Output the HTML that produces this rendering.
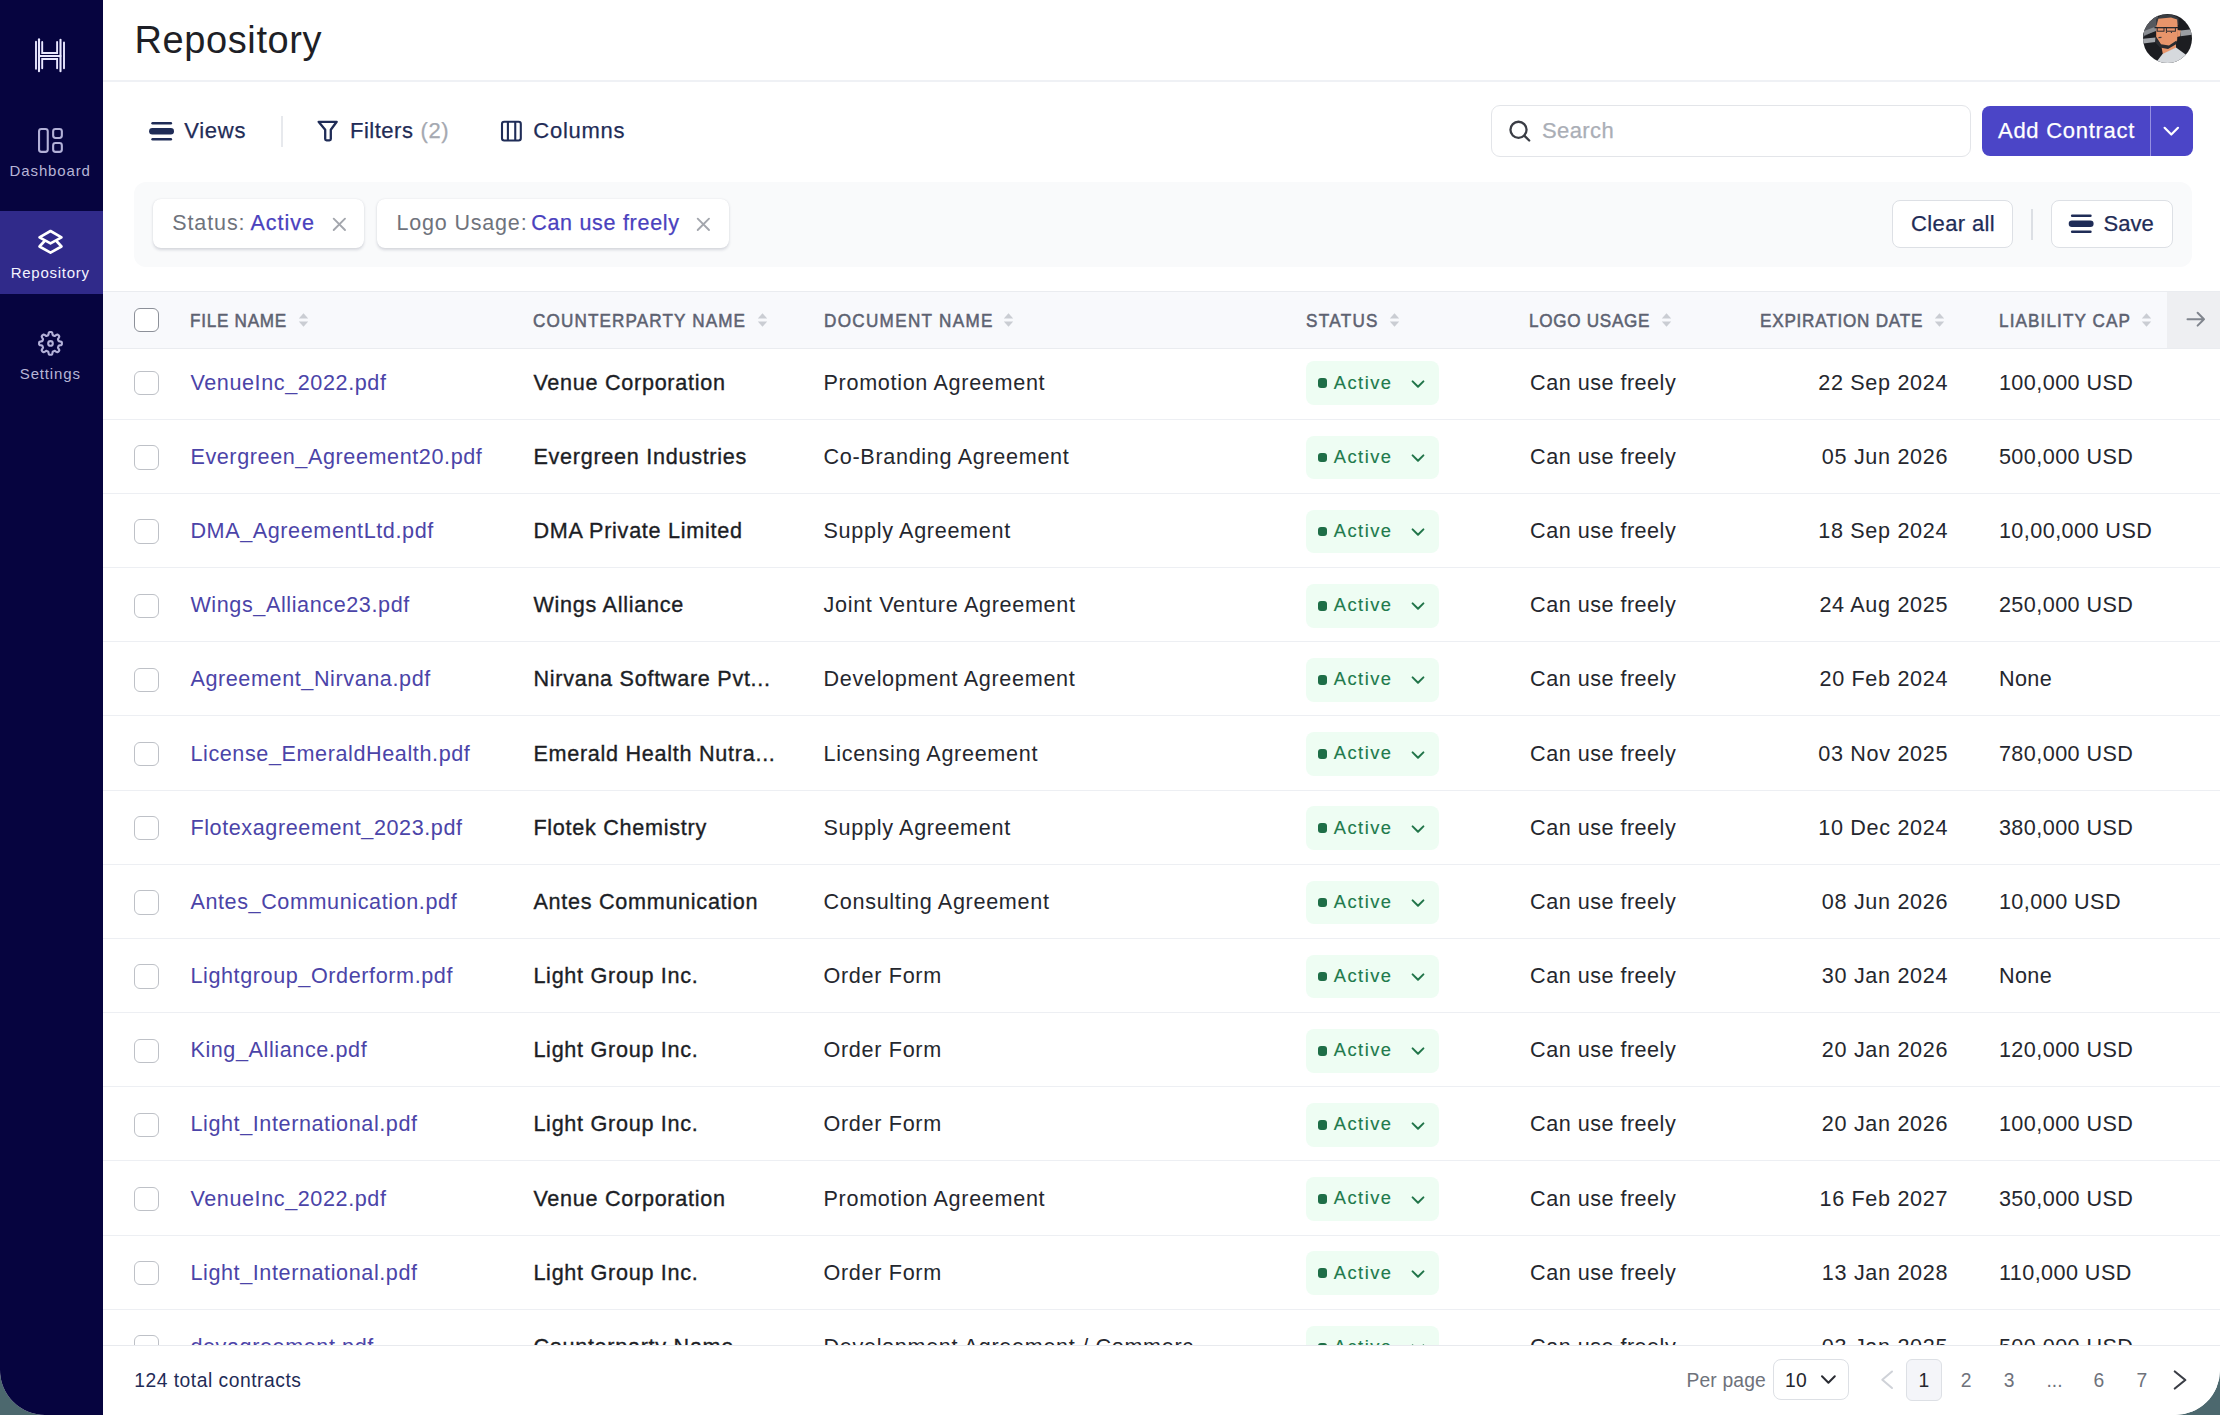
<!DOCTYPE html>
<html><head><meta charset="utf-8">
<style>
*{box-sizing:border-box;margin:0;padding:0}
html,body{width:2220px;height:1415px;overflow:hidden;background:#4C686E;font-family:"Liberation Sans",sans-serif}
.app{position:absolute;left:0;top:0;width:2220px;height:1415px;background:#fff;border-radius:0 0 45px 45px;overflow:hidden}
.ab{position:absolute}
.t{position:absolute;white-space:nowrap;color:#2A2C33}
.nav{color:#B7B5D6}
.tb{color:#1F2C57;-webkit-text-stroke:0.25px currentColor}
.chip{background:#fff;border-radius:8px;box-shadow:0 1.5px 3px rgba(30,40,70,0.16),0 0 1px rgba(30,40,70,0.08)}
.chipg{color:#6F737C}
.chipv{color:#4A41BE;-webkit-text-stroke:0.25px #4A41BE}
.link{color:#4B44A8}
.cp{color:#1C1E25;-webkit-text-stroke:0.35px #1C1E25}
.dn{color:#25272E}
.badge{color:#217A4C;-webkit-text-stroke:0.15px #217A4C}
.hd{color:#5D6271;-webkit-text-stroke:0.55px #5D6271}
.foot{color:#1F2C57}
.pg{color:#6E727B}
.pgd{color:#25272E}
</style></head><body>
<div class="app">
<div class="ab" style="left:0;top:0;width:103px;height:1415px;background:#06043F"></div>
<div class="ab" style="left:0;top:211px;width:103px;height:83px;background:#302A8A"></div>
<svg class="ab" style="left:0;top:0" width="103" height="100" viewBox="0 0 103 100">
<g stroke="#E9E7FF" fill="none" stroke-linecap="round" stroke-linejoin="miter">
<path d="M36 41.8 V68.8" stroke-width="1.9"/>
<path d="M39 39.3 V71.2" stroke-width="2.1"/>
<path d="M42.2 42 V53 H57.1 V42" stroke-width="1.9"/>
<path d="M42.2 68.2 V59 H57.1 V68.2" stroke-width="1.9"/>
<path d="M39 55.9 H60.5" stroke-width="2"/>
<path d="M60.5 39.8 V71.2" stroke-width="2.1"/>
<path d="M64 42.5 V68.2" stroke-width="1.9"/>
</g></svg>
<svg class="ab" style="left:0;top:100px" width="103" height="100" viewBox="0 100 103 100">
<g fill="none" stroke="#B3B1D8" stroke-width="2.1">
<rect x="39.05" y="128.95" width="8.7" height="22.9" rx="2.4"/>
<rect x="53.15" y="128.95" width="8.7" height="9" rx="2.4"/>
<rect x="53.15" y="143.05" width="8.7" height="8.8" rx="2.4"/>
</g></svg>
<svg class="ab" style="left:0;top:200px" width="103" height="100" viewBox="0 200 103 100">
<g fill="none" stroke="#fff" stroke-width="2.6" stroke-linejoin="round" stroke-linecap="round">
<path d="M50.5 231 L61.5 237.3 L50.5 243.4 L39.5 237.3 Z"/>
<path d="M44.6 241 L39.5 246.5 L50.5 252.6 L61.5 246.5 L56.4 241"/>
</g></svg>
<svg class="ab" style="left:0;top:300px" width="103" height="100" viewBox="0 300 103 100">
<g fill="none" stroke="#B3B1D8" stroke-width="2.1" stroke-linejoin="round">
<path d="M61.9 343.4 L61.9 343.6 L61.9 343.8 L61.9 344.1 L61.8 344.3 L61.8 344.5 L61.6 344.7 L61.5 344.9 L61.2 345.1 L60.7 345.2 L60.2 345.3 L59.7 345.4 L59.2 345.5 L58.9 345.6 L58.8 345.7 L58.6 345.9 L58.5 346.0 L58.5 346.2 L58.4 346.3 L58.3 346.5 L58.3 346.6 L58.2 346.8 L58.1 346.9 L58.1 347.1 L58.0 347.2 L58.0 347.4 L58.0 347.6 L58.0 347.8 L58.2 348.1 L58.4 348.5 L58.7 348.9 L59.0 349.4 L59.2 349.8 L59.3 350.1 L59.3 350.3 L59.2 350.6 L59.1 350.8 L59.0 351.0 L58.9 351.1 L58.7 351.3 L58.6 351.5 L58.4 351.6 L58.2 351.8 L58.1 351.9 L57.9 352.0 L57.7 352.1 L57.4 352.2 L57.2 352.2 L56.9 352.1 L56.5 351.9 L56.0 351.6 L55.6 351.3 L55.2 351.1 L54.9 350.9 L54.7 350.9 L54.5 350.9 L54.3 350.9 L54.2 351.0 L54.0 351.0 L53.9 351.1 L53.7 351.2 L53.6 351.2 L53.4 351.3 L53.3 351.4 L53.1 351.4 L53.0 351.5 L52.8 351.7 L52.7 351.8 L52.6 352.1 L52.5 352.6 L52.4 353.1 L52.3 353.6 L52.2 354.1 L52.0 354.4 L51.8 354.5 L51.6 354.7 L51.4 354.7 L51.2 354.8 L50.9 354.8 L50.7 354.8 L50.5 354.8 L50.3 354.8 L50.1 354.8 L49.8 354.8 L49.6 354.7 L49.4 354.7 L49.2 354.5 L49.0 354.4 L48.8 354.1 L48.7 353.6 L48.6 353.1 L48.5 352.6 L48.4 352.1 L48.3 351.8 L48.2 351.7 L48.0 351.5 L47.9 351.4 L47.7 351.4 L47.6 351.3 L47.4 351.2 L47.3 351.2 L47.1 351.1 L47.0 351.0 L46.8 351.0 L46.7 350.9 L46.5 350.9 L46.3 350.9 L46.1 350.9 L45.8 351.1 L45.4 351.3 L45.0 351.6 L44.5 351.9 L44.1 352.1 L43.8 352.2 L43.6 352.2 L43.3 352.1 L43.1 352.0 L42.9 351.9 L42.8 351.8 L42.6 351.6 L42.4 351.5 L42.3 351.3 L42.1 351.1 L42.0 351.0 L41.9 350.8 L41.8 350.6 L41.7 350.3 L41.7 350.1 L41.8 349.8 L42.0 349.4 L42.3 348.9 L42.6 348.5 L42.8 348.1 L43.0 347.8 L43.0 347.6 L43.0 347.4 L43.0 347.2 L42.9 347.1 L42.9 346.9 L42.8 346.8 L42.7 346.6 L42.7 346.5 L42.6 346.3 L42.5 346.2 L42.5 346.0 L42.4 345.9 L42.2 345.7 L42.1 345.6 L41.8 345.5 L41.3 345.4 L40.8 345.3 L40.3 345.2 L39.8 345.1 L39.5 344.9 L39.4 344.7 L39.2 344.5 L39.2 344.3 L39.1 344.1 L39.1 343.8 L39.1 343.6 L39.1 343.4 L39.1 343.2 L39.1 343.0 L39.1 342.7 L39.2 342.5 L39.2 342.3 L39.4 342.1 L39.5 341.9 L39.8 341.7 L40.3 341.6 L40.8 341.5 L41.3 341.4 L41.8 341.3 L42.1 341.2 L42.2 341.1 L42.4 340.9 L42.5 340.8 L42.5 340.6 L42.6 340.5 L42.7 340.3 L42.7 340.2 L42.8 340.0 L42.9 339.9 L42.9 339.7 L43.0 339.6 L43.0 339.4 L43.0 339.2 L43.0 339.0 L42.8 338.7 L42.6 338.3 L42.3 337.9 L42.0 337.4 L41.8 337.0 L41.7 336.7 L41.7 336.5 L41.8 336.2 L41.9 336.0 L42.0 335.8 L42.1 335.7 L42.3 335.5 L42.4 335.3 L42.6 335.2 L42.8 335.0 L42.9 334.9 L43.1 334.8 L43.3 334.7 L43.6 334.6 L43.8 334.6 L44.1 334.7 L44.5 334.9 L45.0 335.2 L45.4 335.5 L45.8 335.7 L46.1 335.9 L46.3 335.9 L46.5 335.9 L46.7 335.9 L46.8 335.8 L47.0 335.8 L47.1 335.7 L47.3 335.6 L47.4 335.6 L47.6 335.5 L47.7 335.4 L47.9 335.4 L48.0 335.3 L48.2 335.1 L48.3 335.0 L48.4 334.7 L48.5 334.2 L48.6 333.7 L48.7 333.2 L48.8 332.7 L49.0 332.4 L49.2 332.3 L49.4 332.1 L49.6 332.1 L49.8 332.0 L50.1 332.0 L50.3 332.0 L50.5 332.0 L50.7 332.0 L50.9 332.0 L51.2 332.0 L51.4 332.1 L51.6 332.1 L51.8 332.3 L52.0 332.4 L52.2 332.7 L52.3 333.2 L52.4 333.7 L52.5 334.2 L52.6 334.7 L52.7 335.0 L52.8 335.1 L53.0 335.3 L53.1 335.4 L53.3 335.4 L53.4 335.5 L53.6 335.6 L53.7 335.6 L53.9 335.7 L54.0 335.8 L54.2 335.8 L54.3 335.9 L54.5 335.9 L54.7 335.9 L54.9 335.9 L55.2 335.7 L55.6 335.5 L56.0 335.2 L56.5 334.9 L56.9 334.7 L57.2 334.6 L57.4 334.6 L57.7 334.7 L57.9 334.8 L58.1 334.9 L58.2 335.0 L58.4 335.2 L58.6 335.3 L58.7 335.5 L58.9 335.7 L59.0 335.8 L59.1 336.0 L59.2 336.2 L59.3 336.5 L59.3 336.7 L59.2 337.0 L59.0 337.4 L58.7 337.9 L58.4 338.3 L58.2 338.7 L58.0 339.0 L58.0 339.2 L58.0 339.4 L58.0 339.6 L58.1 339.7 L58.1 339.9 L58.2 340.0 L58.3 340.2 L58.3 340.3 L58.4 340.5 L58.5 340.6 L58.5 340.8 L58.6 340.9 L58.8 341.1 L58.9 341.2 L59.2 341.3 L59.7 341.4 L60.2 341.5 L60.7 341.6 L61.2 341.7 L61.5 341.9 L61.6 342.1 L61.8 342.3 L61.8 342.5 L61.9 342.7 L61.9 343.0 L61.9 343.2Z"/>
<circle cx="50.5" cy="343.4" r="2.3"/>
</g></svg>
<span class="t nav" style="left:9.60px;top:163.30px;font-size:15px;line-height:15px;letter-spacing:0.87px">Dashboard</span>
<span class="t nav" style="left:10.70px;top:265.30px;font-size:15px;line-height:15px;color:#F4F3FF;letter-spacing:0.73px">Repository</span>
<span class="t nav" style="left:19.80px;top:365.70px;font-size:15px;line-height:15px;letter-spacing:0.84px">Settings</span>
<span class="t " style="left:134.50px;top:20.93px;font-size:38px;line-height:38px;color:#1E1F26;letter-spacing:0.6px">Repository</span>
<div class="ab" style="left:103px;top:80px;width:2117px;height:2px;background:#EFF1F5"></div>
<div class="ab" style="left:2143.2px;top:13.8px;width:49.2px;height:49.2px;border-radius:50%;overflow:hidden"><svg style="position:absolute;left:-0.2px;top:0.2px" width="50" height="50" viewBox="2143 14 50 50">
<g>
<rect x="2140" y="10" width="60" height="60" fill="#1C1D21"/>
<path d="M2143 24 L2150 16 L2158 14 L2158 29 L2143 37 Z" fill="#55585E"/>
<path d="M2144 31 L2156 26.5 L2156 31 L2144 35.5 Z" fill="#8A8D92"/>
<path d="M2143 38.8 L2155.5 37.6 L2155.5 42 L2143 43.6 Z" fill="#A3A6AB"/>
<path d="M2156 19 L2162 14.6 L2172 14.4 L2178.5 18 L2178.5 25 L2156 25 Z" fill="#3A3C41"/>
<path d="M2158.4 18.7 L2171 17.5 L2177.1 19.5 L2177.7 27 L2177.1 41 L2172 44.7 L2161 44.7 L2156.2 38 L2156.2 27 Z" fill="#E8956B"/>
<path d="M2177.1 30 L2181 30.5 L2180 36.2 L2177.1 37 Z" fill="#E8956B"/>
<path d="M2160.7 43 L2176 41.8 L2176 48 L2163 54.8 Z" fill="#E8956B"/>
<path d="M2180.5 30.6 L2193 29.2 L2193 34.5 L2180.5 36.2 Z" fill="#9A9DA2"/>
<path d="M2156.2 36.7 L2161 44.2 L2169 45.6 L2176.5 40.5 L2176.5 44 L2168 49 L2160 47.5 L2155 42 Z" fill="#2B2C31"/>
<path d="M2154.5 27.6 H2178.2" stroke="#1E1F24" stroke-width="1.4"/>
<rect x="2157.2" y="27.6" width="6.8" height="3.6" fill="none" stroke="#2A2B30" stroke-width="1"/>
<rect x="2166.4" y="27.6" width="9" height="3.6" fill="none" stroke="#2A2B30" stroke-width="1"/>
<circle cx="2166.4" cy="32.4" r="0.6" fill="#2A2B30"/><circle cx="2171.4" cy="32.4" r="0.6" fill="#2A2B30"/>
<path d="M2158.5 37.6 L2161.5 37.3" stroke="#3A3B40" stroke-width="1.2"/>
<path d="M2155.6 63 L2162.5 54 L2176 47.5 L2186 54.8 L2186 64 Z" fill="#D6D9DD"/>
</g></svg></div>
<svg class="ab" style="left:140px;top:110px" width="40" height="40" viewBox="140 110 40 40"><g fill="#1F2C57">
<rect x="151.3" y="122" width="20.8" height="2.5" rx="1.25"/>
<rect x="149.1" y="128" width="24.9" height="6.4" rx="3.2"/>
<rect x="151.3" y="138.1" width="20.8" height="2.5" rx="1.25"/>
</g></svg>
<span class="t tb" style="left:184.30px;top:120.28px;font-size:22px;line-height:22px;letter-spacing:0.7px">Views</span>
<div class="ab" style="left:280.5px;top:116px;width:2px;height:31px;background:#E7E9ED"></div>
<svg class="ab" style="left:310px;top:112px" width="36" height="36" viewBox="310 112 36 36"><path d="M318.6 121.8 H336.7 L330.8 129.8 V139 Q330.8 140.3 329.5 140.3 H326.5 Q325.2 140.3 325.2 139 V129.8 Z" fill="none" stroke="#1F2C57" stroke-width="2.3" stroke-linejoin="round"/></svg>
<span class="t tb" style="left:350.00px;top:120.28px;font-size:22px;line-height:22px;letter-spacing:0.5px">Filters</span>
<span class="t tb" style="left:420.40px;top:120.28px;font-size:22px;line-height:22px;color:#A5A9B1;letter-spacing:0.7px">(2)</span>
<svg class="ab" style="left:494px;top:112px" width="36" height="36" viewBox="494 112 36 36"><g fill="none" stroke="#1F2C57" stroke-width="2.1"><rect x="502" y="121.8" width="18.8" height="18.7" rx="2.2"/><path d="M507.9 121.8 V140.5 M515.25 121.8 V140.5"/></g></svg>
<span class="t tb" style="left:533.30px;top:120.28px;font-size:22px;line-height:22px;letter-spacing:0.73px">Columns</span>
<div class="ab" style="left:1490.5px;top:105px;width:480px;height:52px;border:1.5px solid #E3E5E9;border-radius:9px;background:#fff"></div>
<svg class="ab" style="left:1500px;top:112px" width="40" height="40" viewBox="1500 112 40 40"><g fill="none" stroke="#3A3D45" stroke-width="2.3" stroke-linecap="round"><circle cx="1518.5" cy="129.8" r="8.05"/><path d="M1524.3 135.6 L1529.2 140.5"/></g></svg>
<span class="t tb" style="left:1542.00px;top:120.28px;font-size:22px;line-height:22px;color:#AAAEB6;letter-spacing:0.4px">Search</span>
<div class="ab" style="left:1982px;top:106.4px;width:211px;height:49.6px;background:#4B45C7;border-radius:8px"></div>
<div class="ab" style="left:2150px;top:106.4px;width:1.2px;height:49.6px;background:#958FE2"></div>
<svg class="ab" style="left:2158px;top:120px" width="28" height="22" viewBox="2158 120 28 22"><path d="M2164.6 127.8 L2171.3 134.5 L2178 127.8" fill="none" stroke="#fff" stroke-width="2.2" stroke-linecap="round" stroke-linejoin="round"/></svg>
<span class="t tb" style="left:1998.00px;top:120.28px;font-size:22px;line-height:22px;color:#fff;letter-spacing:0.73px">Add Contract</span>
<div class="ab" style="left:134px;top:182px;width:2058px;height:85px;background:#F9FAFB;border-radius:12px"></div>
<div class="ab chip" style="left:152.5px;top:199px;width:211.5px;height:49px"></div>
<div class="ab chip" style="left:376.5px;top:199px;width:352px;height:49px"></div>
<span class="t chipg" style="left:172.20px;top:212.50px;font-size:21.5px;line-height:21.5px;letter-spacing:0.9px">Status:</span>
<span class="t chipv" style="left:250.50px;top:212.50px;font-size:21.5px;line-height:21.5px;letter-spacing:1.0px">Active</span>
<span class="t chipg" style="left:396.50px;top:212.50px;font-size:21.5px;line-height:21.5px;letter-spacing:0.82px">Logo Usage:</span>
<span class="t chipv" style="left:531.20px;top:212.50px;font-size:21.5px;line-height:21.5px;letter-spacing:0.71px">Can use freely</span>
<svg class="ab" style="left:331.4px;top:215.6px" width="17" height="17" viewBox="0 0 17 17"><path d="M2.7 2.7 L14 14 M14 2.7 L2.7 14" stroke="#A3A6AD" stroke-width="1.9" stroke-linecap="round"/></svg>
<svg class="ab" style="left:695.4px;top:215.6px" width="17" height="17" viewBox="0 0 17 17"><path d="M2.7 2.7 L14 14 M14 2.7 L2.7 14" stroke="#A3A6AD" stroke-width="1.9" stroke-linecap="round"/></svg>
<div class="ab" style="left:1892px;top:199.6px;width:120.5px;height:48.3px;border:1.5px solid #DDE0E5;border-radius:8px;background:#fff"></div>
<span class="t tb" style="left:1911.00px;top:213.28px;font-size:22px;line-height:22px;letter-spacing:0.38px">Clear all</span>
<div class="ab" style="left:2031px;top:209px;width:2px;height:31px;background:#DCDFE4"></div>
<div class="ab" style="left:2050.5px;top:199.6px;width:122.5px;height:48.3px;border:1.5px solid #DDE0E5;border-radius:8px;background:#fff"></div>
<svg class="ab" style="left:2060px;top:205px" width="40" height="40" viewBox="2060 205 40 40"><g fill="#1F2C57">
<rect x="2070.9" y="214.5" width="20.8" height="2.5" rx="1.25"/>
<rect x="2068.7" y="220.5" width="24.9" height="6.4" rx="3.2"/>
<rect x="2070.9" y="230.6" width="20.8" height="2.5" rx="1.25"/>
</g></svg>
<span class="t tb" style="left:2103.60px;top:213.28px;font-size:22px;line-height:22px;letter-spacing:0.0px">Save</span>
<div class="ab" style="left:103px;top:418.70px;width:2117px;height:1px;background:#EDEFF3"></div>
<div style="position:absolute;width:24.4px;height:24.4px;border:1.8px solid #BEC1C7;border-radius:6px;background:#fff;left:134.2px;top:371.00px"></div>
<span class="t link" style="left:190.40px;top:371.72px;font-size:21.6px;line-height:21.6px;letter-spacing:0.59px">VenueInc_2022.pdf</span>
<span class="t cp" style="left:533.40px;top:371.72px;font-size:21.6px;line-height:21.6px;letter-spacing:0.72px">Venue Corporation</span>
<span class="t dn" style="left:823.50px;top:371.72px;font-size:21.6px;line-height:21.6px;letter-spacing:0.68px">Promotion Agreement</span>
<div class="ab" style="left:1306.4px;top:361.40px;width:133px;height:43.6px;background:#EEFDF3;border-radius:8px"></div>
<div class="ab" style="left:1317.8px;top:378.40px;width:9.4px;height:9.6px;border-radius:3px;background:#1E6E47"></div>
<span class="t badge" style="left:1333.80px;top:373.51px;font-size:18.3px;line-height:18.3px;letter-spacing:1.48px">Active</span>
<svg class="ab" style="left:1409px;top:377.80px" width="18" height="14" viewBox="0 0 18 14"><path d="M3.6 3.4 L9 8.7 L14.4 3.4" fill="none" stroke="#217549" stroke-width="2.0" stroke-linecap="round" stroke-linejoin="round"/></svg>
<span class="t dn" style="left:1530.10px;top:371.72px;font-size:21.6px;line-height:21.6px;letter-spacing:0.49px">Can use freely</span>
<span class="t dn" style="right:271.82px;top:371.72px;font-size:21.6px;line-height:21.6px;letter-spacing:0.68px">22 Sep 2024</span>
<span class="t dn" style="left:1998.90px;top:371.72px;font-size:21.6px;line-height:21.6px;letter-spacing:0.44px">100,000 USD</span>
<div class="ab" style="left:103px;top:492.87px;width:2117px;height:1px;background:#EDEFF3"></div>
<div style="position:absolute;width:24.4px;height:24.4px;border:1.8px solid #BEC1C7;border-radius:6px;background:#fff;left:134.2px;top:445.17px"></div>
<span class="t link" style="left:190.40px;top:445.89px;font-size:21.6px;line-height:21.6px;letter-spacing:0.59px">Evergreen_Agreement20.pdf</span>
<span class="t cp" style="left:533.40px;top:445.89px;font-size:21.6px;line-height:21.6px;letter-spacing:0.72px">Evergreen Industries</span>
<span class="t dn" style="left:823.50px;top:445.89px;font-size:21.6px;line-height:21.6px;letter-spacing:0.68px">Co-Branding Agreement</span>
<div class="ab" style="left:1306.4px;top:435.57px;width:133px;height:43.6px;background:#EEFDF3;border-radius:8px"></div>
<div class="ab" style="left:1317.8px;top:452.57px;width:9.4px;height:9.6px;border-radius:3px;background:#1E6E47"></div>
<span class="t badge" style="left:1333.80px;top:447.68px;font-size:18.3px;line-height:18.3px;letter-spacing:1.48px">Active</span>
<svg class="ab" style="left:1409px;top:451.97px" width="18" height="14" viewBox="0 0 18 14"><path d="M3.6 3.4 L9 8.7 L14.4 3.4" fill="none" stroke="#217549" stroke-width="2.0" stroke-linecap="round" stroke-linejoin="round"/></svg>
<span class="t dn" style="left:1530.10px;top:445.89px;font-size:21.6px;line-height:21.6px;letter-spacing:0.49px">Can use freely</span>
<span class="t dn" style="right:271.82px;top:445.89px;font-size:21.6px;line-height:21.6px;letter-spacing:0.68px">05 Jun 2026</span>
<span class="t dn" style="left:1998.90px;top:445.89px;font-size:21.6px;line-height:21.6px;letter-spacing:0.44px">500,000 USD</span>
<div class="ab" style="left:103px;top:567.04px;width:2117px;height:1px;background:#EDEFF3"></div>
<div style="position:absolute;width:24.4px;height:24.4px;border:1.8px solid #BEC1C7;border-radius:6px;background:#fff;left:134.2px;top:519.34px"></div>
<span class="t link" style="left:190.40px;top:520.06px;font-size:21.6px;line-height:21.6px;letter-spacing:0.59px">DMA_AgreementLtd.pdf</span>
<span class="t cp" style="left:533.40px;top:520.06px;font-size:21.6px;line-height:21.6px;letter-spacing:0.72px">DMA Private Limited</span>
<span class="t dn" style="left:823.50px;top:520.06px;font-size:21.6px;line-height:21.6px;letter-spacing:0.68px">Supply Agreement</span>
<div class="ab" style="left:1306.4px;top:509.74px;width:133px;height:43.6px;background:#EEFDF3;border-radius:8px"></div>
<div class="ab" style="left:1317.8px;top:526.74px;width:9.4px;height:9.6px;border-radius:3px;background:#1E6E47"></div>
<span class="t badge" style="left:1333.80px;top:521.85px;font-size:18.3px;line-height:18.3px;letter-spacing:1.48px">Active</span>
<svg class="ab" style="left:1409px;top:526.14px" width="18" height="14" viewBox="0 0 18 14"><path d="M3.6 3.4 L9 8.7 L14.4 3.4" fill="none" stroke="#217549" stroke-width="2.0" stroke-linecap="round" stroke-linejoin="round"/></svg>
<span class="t dn" style="left:1530.10px;top:520.06px;font-size:21.6px;line-height:21.6px;letter-spacing:0.49px">Can use freely</span>
<span class="t dn" style="right:271.82px;top:520.06px;font-size:21.6px;line-height:21.6px;letter-spacing:0.68px">18 Sep 2024</span>
<span class="t dn" style="left:1998.90px;top:520.06px;font-size:21.6px;line-height:21.6px;letter-spacing:0.44px">10,00,000 USD</span>
<div class="ab" style="left:103px;top:641.21px;width:2117px;height:1px;background:#EDEFF3"></div>
<div style="position:absolute;width:24.4px;height:24.4px;border:1.8px solid #BEC1C7;border-radius:6px;background:#fff;left:134.2px;top:593.51px"></div>
<span class="t link" style="left:190.40px;top:594.23px;font-size:21.6px;line-height:21.6px;letter-spacing:0.59px">Wings_Alliance23.pdf</span>
<span class="t cp" style="left:533.40px;top:594.23px;font-size:21.6px;line-height:21.6px;letter-spacing:0.72px">Wings Alliance</span>
<span class="t dn" style="left:823.50px;top:594.23px;font-size:21.6px;line-height:21.6px;letter-spacing:0.68px">Joint Venture Agreement</span>
<div class="ab" style="left:1306.4px;top:583.91px;width:133px;height:43.6px;background:#EEFDF3;border-radius:8px"></div>
<div class="ab" style="left:1317.8px;top:600.91px;width:9.4px;height:9.6px;border-radius:3px;background:#1E6E47"></div>
<span class="t badge" style="left:1333.80px;top:596.02px;font-size:18.3px;line-height:18.3px;letter-spacing:1.48px">Active</span>
<svg class="ab" style="left:1409px;top:600.31px" width="18" height="14" viewBox="0 0 18 14"><path d="M3.6 3.4 L9 8.7 L14.4 3.4" fill="none" stroke="#217549" stroke-width="2.0" stroke-linecap="round" stroke-linejoin="round"/></svg>
<span class="t dn" style="left:1530.10px;top:594.23px;font-size:21.6px;line-height:21.6px;letter-spacing:0.49px">Can use freely</span>
<span class="t dn" style="right:271.82px;top:594.23px;font-size:21.6px;line-height:21.6px;letter-spacing:0.68px">24 Aug 2025</span>
<span class="t dn" style="left:1998.90px;top:594.23px;font-size:21.6px;line-height:21.6px;letter-spacing:0.44px">250,000 USD</span>
<div class="ab" style="left:103px;top:715.38px;width:2117px;height:1px;background:#EDEFF3"></div>
<div style="position:absolute;width:24.4px;height:24.4px;border:1.8px solid #BEC1C7;border-radius:6px;background:#fff;left:134.2px;top:667.68px"></div>
<span class="t link" style="left:190.40px;top:668.40px;font-size:21.6px;line-height:21.6px;letter-spacing:0.59px">Agreement_Nirvana.pdf</span>
<span class="t cp" style="left:533.40px;top:668.40px;font-size:21.6px;line-height:21.6px;letter-spacing:0.72px">Nirvana Software Pvt...</span>
<span class="t dn" style="left:823.50px;top:668.40px;font-size:21.6px;line-height:21.6px;letter-spacing:0.68px">Development Agreement</span>
<div class="ab" style="left:1306.4px;top:658.08px;width:133px;height:43.6px;background:#EEFDF3;border-radius:8px"></div>
<div class="ab" style="left:1317.8px;top:675.08px;width:9.4px;height:9.6px;border-radius:3px;background:#1E6E47"></div>
<span class="t badge" style="left:1333.80px;top:670.19px;font-size:18.3px;line-height:18.3px;letter-spacing:1.48px">Active</span>
<svg class="ab" style="left:1409px;top:674.48px" width="18" height="14" viewBox="0 0 18 14"><path d="M3.6 3.4 L9 8.7 L14.4 3.4" fill="none" stroke="#217549" stroke-width="2.0" stroke-linecap="round" stroke-linejoin="round"/></svg>
<span class="t dn" style="left:1530.10px;top:668.40px;font-size:21.6px;line-height:21.6px;letter-spacing:0.49px">Can use freely</span>
<span class="t dn" style="right:271.82px;top:668.40px;font-size:21.6px;line-height:21.6px;letter-spacing:0.68px">20 Feb 2024</span>
<span class="t dn" style="left:1998.90px;top:668.40px;font-size:21.6px;line-height:21.6px;letter-spacing:0.44px">None</span>
<div class="ab" style="left:103px;top:789.55px;width:2117px;height:1px;background:#EDEFF3"></div>
<div style="position:absolute;width:24.4px;height:24.4px;border:1.8px solid #BEC1C7;border-radius:6px;background:#fff;left:134.2px;top:741.85px"></div>
<span class="t link" style="left:190.40px;top:742.57px;font-size:21.6px;line-height:21.6px;letter-spacing:0.59px">License_EmeraldHealth.pdf</span>
<span class="t cp" style="left:533.40px;top:742.57px;font-size:21.6px;line-height:21.6px;letter-spacing:0.72px">Emerald Health Nutra...</span>
<span class="t dn" style="left:823.50px;top:742.57px;font-size:21.6px;line-height:21.6px;letter-spacing:0.68px">Licensing Agreement</span>
<div class="ab" style="left:1306.4px;top:732.25px;width:133px;height:43.6px;background:#EEFDF3;border-radius:8px"></div>
<div class="ab" style="left:1317.8px;top:749.25px;width:9.4px;height:9.6px;border-radius:3px;background:#1E6E47"></div>
<span class="t badge" style="left:1333.80px;top:744.36px;font-size:18.3px;line-height:18.3px;letter-spacing:1.48px">Active</span>
<svg class="ab" style="left:1409px;top:748.65px" width="18" height="14" viewBox="0 0 18 14"><path d="M3.6 3.4 L9 8.7 L14.4 3.4" fill="none" stroke="#217549" stroke-width="2.0" stroke-linecap="round" stroke-linejoin="round"/></svg>
<span class="t dn" style="left:1530.10px;top:742.57px;font-size:21.6px;line-height:21.6px;letter-spacing:0.49px">Can use freely</span>
<span class="t dn" style="right:271.82px;top:742.57px;font-size:21.6px;line-height:21.6px;letter-spacing:0.68px">03 Nov 2025</span>
<span class="t dn" style="left:1998.90px;top:742.57px;font-size:21.6px;line-height:21.6px;letter-spacing:0.44px">780,000 USD</span>
<div class="ab" style="left:103px;top:863.72px;width:2117px;height:1px;background:#EDEFF3"></div>
<div style="position:absolute;width:24.4px;height:24.4px;border:1.8px solid #BEC1C7;border-radius:6px;background:#fff;left:134.2px;top:816.02px"></div>
<span class="t link" style="left:190.40px;top:816.74px;font-size:21.6px;line-height:21.6px;letter-spacing:0.59px">Flotexagreement_2023.pdf</span>
<span class="t cp" style="left:533.40px;top:816.74px;font-size:21.6px;line-height:21.6px;letter-spacing:0.72px">Flotek Chemistry</span>
<span class="t dn" style="left:823.50px;top:816.74px;font-size:21.6px;line-height:21.6px;letter-spacing:0.68px">Supply Agreement</span>
<div class="ab" style="left:1306.4px;top:806.42px;width:133px;height:43.6px;background:#EEFDF3;border-radius:8px"></div>
<div class="ab" style="left:1317.8px;top:823.42px;width:9.4px;height:9.6px;border-radius:3px;background:#1E6E47"></div>
<span class="t badge" style="left:1333.80px;top:818.53px;font-size:18.3px;line-height:18.3px;letter-spacing:1.48px">Active</span>
<svg class="ab" style="left:1409px;top:822.82px" width="18" height="14" viewBox="0 0 18 14"><path d="M3.6 3.4 L9 8.7 L14.4 3.4" fill="none" stroke="#217549" stroke-width="2.0" stroke-linecap="round" stroke-linejoin="round"/></svg>
<span class="t dn" style="left:1530.10px;top:816.74px;font-size:21.6px;line-height:21.6px;letter-spacing:0.49px">Can use freely</span>
<span class="t dn" style="right:271.82px;top:816.74px;font-size:21.6px;line-height:21.6px;letter-spacing:0.68px">10 Dec 2024</span>
<span class="t dn" style="left:1998.90px;top:816.74px;font-size:21.6px;line-height:21.6px;letter-spacing:0.44px">380,000 USD</span>
<div class="ab" style="left:103px;top:937.89px;width:2117px;height:1px;background:#EDEFF3"></div>
<div style="position:absolute;width:24.4px;height:24.4px;border:1.8px solid #BEC1C7;border-radius:6px;background:#fff;left:134.2px;top:890.19px"></div>
<span class="t link" style="left:190.40px;top:890.91px;font-size:21.6px;line-height:21.6px;letter-spacing:0.59px">Antes_Communication.pdf</span>
<span class="t cp" style="left:533.40px;top:890.91px;font-size:21.6px;line-height:21.6px;letter-spacing:0.72px">Antes Communication</span>
<span class="t dn" style="left:823.50px;top:890.91px;font-size:21.6px;line-height:21.6px;letter-spacing:0.68px">Consulting Agreement</span>
<div class="ab" style="left:1306.4px;top:880.59px;width:133px;height:43.6px;background:#EEFDF3;border-radius:8px"></div>
<div class="ab" style="left:1317.8px;top:897.59px;width:9.4px;height:9.6px;border-radius:3px;background:#1E6E47"></div>
<span class="t badge" style="left:1333.80px;top:892.70px;font-size:18.3px;line-height:18.3px;letter-spacing:1.48px">Active</span>
<svg class="ab" style="left:1409px;top:896.99px" width="18" height="14" viewBox="0 0 18 14"><path d="M3.6 3.4 L9 8.7 L14.4 3.4" fill="none" stroke="#217549" stroke-width="2.0" stroke-linecap="round" stroke-linejoin="round"/></svg>
<span class="t dn" style="left:1530.10px;top:890.91px;font-size:21.6px;line-height:21.6px;letter-spacing:0.49px">Can use freely</span>
<span class="t dn" style="right:271.82px;top:890.91px;font-size:21.6px;line-height:21.6px;letter-spacing:0.68px">08 Jun 2026</span>
<span class="t dn" style="left:1998.90px;top:890.91px;font-size:21.6px;line-height:21.6px;letter-spacing:0.44px">10,000 USD</span>
<div class="ab" style="left:103px;top:1012.06px;width:2117px;height:1px;background:#EDEFF3"></div>
<div style="position:absolute;width:24.4px;height:24.4px;border:1.8px solid #BEC1C7;border-radius:6px;background:#fff;left:134.2px;top:964.36px"></div>
<span class="t link" style="left:190.40px;top:965.08px;font-size:21.6px;line-height:21.6px;letter-spacing:0.59px">Lightgroup_Orderform.pdf</span>
<span class="t cp" style="left:533.40px;top:965.08px;font-size:21.6px;line-height:21.6px;letter-spacing:0.72px">Light Group Inc.</span>
<span class="t dn" style="left:823.50px;top:965.08px;font-size:21.6px;line-height:21.6px;letter-spacing:0.68px">Order Form</span>
<div class="ab" style="left:1306.4px;top:954.76px;width:133px;height:43.6px;background:#EEFDF3;border-radius:8px"></div>
<div class="ab" style="left:1317.8px;top:971.76px;width:9.4px;height:9.6px;border-radius:3px;background:#1E6E47"></div>
<span class="t badge" style="left:1333.80px;top:966.87px;font-size:18.3px;line-height:18.3px;letter-spacing:1.48px">Active</span>
<svg class="ab" style="left:1409px;top:971.16px" width="18" height="14" viewBox="0 0 18 14"><path d="M3.6 3.4 L9 8.7 L14.4 3.4" fill="none" stroke="#217549" stroke-width="2.0" stroke-linecap="round" stroke-linejoin="round"/></svg>
<span class="t dn" style="left:1530.10px;top:965.08px;font-size:21.6px;line-height:21.6px;letter-spacing:0.49px">Can use freely</span>
<span class="t dn" style="right:271.82px;top:965.08px;font-size:21.6px;line-height:21.6px;letter-spacing:0.68px">30 Jan 2024</span>
<span class="t dn" style="left:1998.90px;top:965.08px;font-size:21.6px;line-height:21.6px;letter-spacing:0.44px">None</span>
<div class="ab" style="left:103px;top:1086.23px;width:2117px;height:1px;background:#EDEFF3"></div>
<div style="position:absolute;width:24.4px;height:24.4px;border:1.8px solid #BEC1C7;border-radius:6px;background:#fff;left:134.2px;top:1038.53px"></div>
<span class="t link" style="left:190.40px;top:1039.25px;font-size:21.6px;line-height:21.6px;letter-spacing:0.59px">King_Alliance.pdf</span>
<span class="t cp" style="left:533.40px;top:1039.25px;font-size:21.6px;line-height:21.6px;letter-spacing:0.72px">Light Group Inc.</span>
<span class="t dn" style="left:823.50px;top:1039.25px;font-size:21.6px;line-height:21.6px;letter-spacing:0.68px">Order Form</span>
<div class="ab" style="left:1306.4px;top:1028.93px;width:133px;height:43.6px;background:#EEFDF3;border-radius:8px"></div>
<div class="ab" style="left:1317.8px;top:1045.93px;width:9.4px;height:9.6px;border-radius:3px;background:#1E6E47"></div>
<span class="t badge" style="left:1333.80px;top:1041.04px;font-size:18.3px;line-height:18.3px;letter-spacing:1.48px">Active</span>
<svg class="ab" style="left:1409px;top:1045.33px" width="18" height="14" viewBox="0 0 18 14"><path d="M3.6 3.4 L9 8.7 L14.4 3.4" fill="none" stroke="#217549" stroke-width="2.0" stroke-linecap="round" stroke-linejoin="round"/></svg>
<span class="t dn" style="left:1530.10px;top:1039.25px;font-size:21.6px;line-height:21.6px;letter-spacing:0.49px">Can use freely</span>
<span class="t dn" style="right:271.82px;top:1039.25px;font-size:21.6px;line-height:21.6px;letter-spacing:0.68px">20 Jan 2026</span>
<span class="t dn" style="left:1998.90px;top:1039.25px;font-size:21.6px;line-height:21.6px;letter-spacing:0.44px">120,000 USD</span>
<div class="ab" style="left:103px;top:1160.40px;width:2117px;height:1px;background:#EDEFF3"></div>
<div style="position:absolute;width:24.4px;height:24.4px;border:1.8px solid #BEC1C7;border-radius:6px;background:#fff;left:134.2px;top:1112.70px"></div>
<span class="t link" style="left:190.40px;top:1113.42px;font-size:21.6px;line-height:21.6px;letter-spacing:0.59px">Light_International.pdf</span>
<span class="t cp" style="left:533.40px;top:1113.42px;font-size:21.6px;line-height:21.6px;letter-spacing:0.72px">Light Group Inc.</span>
<span class="t dn" style="left:823.50px;top:1113.42px;font-size:21.6px;line-height:21.6px;letter-spacing:0.68px">Order Form</span>
<div class="ab" style="left:1306.4px;top:1103.10px;width:133px;height:43.6px;background:#EEFDF3;border-radius:8px"></div>
<div class="ab" style="left:1317.8px;top:1120.10px;width:9.4px;height:9.6px;border-radius:3px;background:#1E6E47"></div>
<span class="t badge" style="left:1333.80px;top:1115.21px;font-size:18.3px;line-height:18.3px;letter-spacing:1.48px">Active</span>
<svg class="ab" style="left:1409px;top:1119.50px" width="18" height="14" viewBox="0 0 18 14"><path d="M3.6 3.4 L9 8.7 L14.4 3.4" fill="none" stroke="#217549" stroke-width="2.0" stroke-linecap="round" stroke-linejoin="round"/></svg>
<span class="t dn" style="left:1530.10px;top:1113.42px;font-size:21.6px;line-height:21.6px;letter-spacing:0.49px">Can use freely</span>
<span class="t dn" style="right:271.82px;top:1113.42px;font-size:21.6px;line-height:21.6px;letter-spacing:0.68px">20 Jan 2026</span>
<span class="t dn" style="left:1998.90px;top:1113.42px;font-size:21.6px;line-height:21.6px;letter-spacing:0.44px">100,000 USD</span>
<div class="ab" style="left:103px;top:1234.57px;width:2117px;height:1px;background:#EDEFF3"></div>
<div style="position:absolute;width:24.4px;height:24.4px;border:1.8px solid #BEC1C7;border-radius:6px;background:#fff;left:134.2px;top:1186.87px"></div>
<span class="t link" style="left:190.40px;top:1187.59px;font-size:21.6px;line-height:21.6px;letter-spacing:0.59px">VenueInc_2022.pdf</span>
<span class="t cp" style="left:533.40px;top:1187.59px;font-size:21.6px;line-height:21.6px;letter-spacing:0.72px">Venue Corporation</span>
<span class="t dn" style="left:823.50px;top:1187.59px;font-size:21.6px;line-height:21.6px;letter-spacing:0.68px">Promotion Agreement</span>
<div class="ab" style="left:1306.4px;top:1177.27px;width:133px;height:43.6px;background:#EEFDF3;border-radius:8px"></div>
<div class="ab" style="left:1317.8px;top:1194.27px;width:9.4px;height:9.6px;border-radius:3px;background:#1E6E47"></div>
<span class="t badge" style="left:1333.80px;top:1189.38px;font-size:18.3px;line-height:18.3px;letter-spacing:1.48px">Active</span>
<svg class="ab" style="left:1409px;top:1193.67px" width="18" height="14" viewBox="0 0 18 14"><path d="M3.6 3.4 L9 8.7 L14.4 3.4" fill="none" stroke="#217549" stroke-width="2.0" stroke-linecap="round" stroke-linejoin="round"/></svg>
<span class="t dn" style="left:1530.10px;top:1187.59px;font-size:21.6px;line-height:21.6px;letter-spacing:0.49px">Can use freely</span>
<span class="t dn" style="right:271.82px;top:1187.59px;font-size:21.6px;line-height:21.6px;letter-spacing:0.68px">16 Feb 2027</span>
<span class="t dn" style="left:1998.90px;top:1187.59px;font-size:21.6px;line-height:21.6px;letter-spacing:0.44px">350,000 USD</span>
<div class="ab" style="left:103px;top:1308.74px;width:2117px;height:1px;background:#EDEFF3"></div>
<div style="position:absolute;width:24.4px;height:24.4px;border:1.8px solid #BEC1C7;border-radius:6px;background:#fff;left:134.2px;top:1261.04px"></div>
<span class="t link" style="left:190.40px;top:1261.76px;font-size:21.6px;line-height:21.6px;letter-spacing:0.59px">Light_International.pdf</span>
<span class="t cp" style="left:533.40px;top:1261.76px;font-size:21.6px;line-height:21.6px;letter-spacing:0.72px">Light Group Inc.</span>
<span class="t dn" style="left:823.50px;top:1261.76px;font-size:21.6px;line-height:21.6px;letter-spacing:0.68px">Order Form</span>
<div class="ab" style="left:1306.4px;top:1251.44px;width:133px;height:43.6px;background:#EEFDF3;border-radius:8px"></div>
<div class="ab" style="left:1317.8px;top:1268.44px;width:9.4px;height:9.6px;border-radius:3px;background:#1E6E47"></div>
<span class="t badge" style="left:1333.80px;top:1263.55px;font-size:18.3px;line-height:18.3px;letter-spacing:1.48px">Active</span>
<svg class="ab" style="left:1409px;top:1267.84px" width="18" height="14" viewBox="0 0 18 14"><path d="M3.6 3.4 L9 8.7 L14.4 3.4" fill="none" stroke="#217549" stroke-width="2.0" stroke-linecap="round" stroke-linejoin="round"/></svg>
<span class="t dn" style="left:1530.10px;top:1261.76px;font-size:21.6px;line-height:21.6px;letter-spacing:0.49px">Can use freely</span>
<span class="t dn" style="right:271.82px;top:1261.76px;font-size:21.6px;line-height:21.6px;letter-spacing:0.68px">13 Jan 2028</span>
<span class="t dn" style="left:1998.90px;top:1261.76px;font-size:21.6px;line-height:21.6px;letter-spacing:0.44px">110,000 USD</span>
<div class="ab" style="left:103px;top:1382.91px;width:2117px;height:1px;background:#EDEFF3"></div>
<div style="position:absolute;width:24.4px;height:24.4px;border:1.8px solid #BEC1C7;border-radius:6px;background:#fff;left:134.2px;top:1335.21px"></div>
<span class="t link" style="left:190.40px;top:1335.93px;font-size:21.6px;line-height:21.6px;letter-spacing:0.59px">devagreement.pdf</span>
<span class="t cp" style="left:533.40px;top:1335.93px;font-size:21.6px;line-height:21.6px;letter-spacing:0.72px">Counterparty Name</span>
<span class="t dn" style="left:823.50px;top:1335.93px;font-size:21.6px;line-height:21.6px;letter-spacing:0.68px">Development Agreement / Commerc</span>
<div class="ab" style="left:1306.4px;top:1325.61px;width:133px;height:43.6px;background:#EEFDF3;border-radius:8px"></div>
<div class="ab" style="left:1317.8px;top:1342.61px;width:9.4px;height:9.6px;border-radius:3px;background:#1E6E47"></div>
<span class="t badge" style="left:1333.80px;top:1337.72px;font-size:18.3px;line-height:18.3px;letter-spacing:1.48px">Active</span>
<svg class="ab" style="left:1409px;top:1342.01px" width="18" height="14" viewBox="0 0 18 14"><path d="M3.6 3.4 L9 8.7 L14.4 3.4" fill="none" stroke="#217549" stroke-width="2.0" stroke-linecap="round" stroke-linejoin="round"/></svg>
<span class="t dn" style="left:1530.10px;top:1335.93px;font-size:21.6px;line-height:21.6px;letter-spacing:0.49px">Can use freely</span>
<span class="t dn" style="right:271.82px;top:1335.93px;font-size:21.6px;line-height:21.6px;letter-spacing:0.68px">03 Jan 2025</span>
<span class="t dn" style="left:1998.90px;top:1335.93px;font-size:21.6px;line-height:21.6px;letter-spacing:0.44px">500,000 USD</span>
<div class="ab" style="left:103px;top:291px;width:2117px;height:58px;background:#F8F9FC;border-top:1px solid #EAECF0;border-bottom:1px solid #EAECF0"></div>
<div class="ab" style="left:2166.5px;top:292px;width:53.5px;height:56px;background:#EEEFF2"></div>
<div style="position:absolute;width:24.4px;height:24.4px;border:1.9px solid #8C9099;border-radius:6px;background:#fff;left:134.2px;top:307.5px"></div>
<span class="t hd" style="left:189.50px;top:310.72px;font-size:19px;line-height:19px;letter-spacing:0.833px;transform:scaleX(0.9);transform-origin:0 0">FILE NAME</span>
<svg class="ab" style="left:298px;top:313px" width="11" height="14" viewBox="0 0 11 14"><path d="M5.5 0.3 L10.2 5.6 H0.8 Z" fill="#CACDD3"/><path d="M5.5 13.7 L10.2 8.4 H0.8 Z" fill="#CACDD3"/></svg>
<span class="t hd" style="left:533.00px;top:310.72px;font-size:19px;line-height:19px;letter-spacing:1.264px;transform:scaleX(0.9);transform-origin:0 0">COUNTERPARTY NAME</span>
<svg class="ab" style="left:757px;top:313px" width="11" height="14" viewBox="0 0 11 14"><path d="M5.5 0.3 L10.2 5.6 H0.8 Z" fill="#CACDD3"/><path d="M5.5 13.7 L10.2 8.4 H0.8 Z" fill="#CACDD3"/></svg>
<span class="t hd" style="left:823.50px;top:310.72px;font-size:19px;line-height:19px;letter-spacing:1.463px;transform:scaleX(0.9);transform-origin:0 0">DOCUMENT NAME</span>
<svg class="ab" style="left:1003px;top:313px" width="11" height="14" viewBox="0 0 11 14"><path d="M5.5 0.3 L10.2 5.6 H0.8 Z" fill="#CACDD3"/><path d="M5.5 13.7 L10.2 8.4 H0.8 Z" fill="#CACDD3"/></svg>
<span class="t hd" style="left:1305.70px;top:310.72px;font-size:19px;line-height:19px;letter-spacing:1.467px;transform:scaleX(0.9);transform-origin:0 0">STATUS</span>
<svg class="ab" style="left:1389px;top:313px" width="11" height="14" viewBox="0 0 11 14"><path d="M5.5 0.3 L10.2 5.6 H0.8 Z" fill="#CACDD3"/><path d="M5.5 13.7 L10.2 8.4 H0.8 Z" fill="#CACDD3"/></svg>
<span class="t hd" style="left:1528.80px;top:310.72px;font-size:19px;line-height:19px;letter-spacing:0.79px;transform:scaleX(0.9);transform-origin:0 0">LOGO USAGE</span>
<svg class="ab" style="left:1661px;top:313px" width="11" height="14" viewBox="0 0 11 14"><path d="M5.5 0.3 L10.2 5.6 H0.8 Z" fill="#CACDD3"/><path d="M5.5 13.7 L10.2 8.4 H0.8 Z" fill="#CACDD3"/></svg>
<span class="t hd" style="left:1760.20px;top:310.72px;font-size:19px;line-height:19px;letter-spacing:0.873px;transform:scaleX(0.9);transform-origin:0 0">EXPIRATION DATE</span>
<svg class="ab" style="left:1934px;top:313px" width="11" height="14" viewBox="0 0 11 14"><path d="M5.5 0.3 L10.2 5.6 H0.8 Z" fill="#CACDD3"/><path d="M5.5 13.7 L10.2 8.4 H0.8 Z" fill="#CACDD3"/></svg>
<span class="t hd" style="left:1999.00px;top:310.72px;font-size:19px;line-height:19px;letter-spacing:1.241px;transform:scaleX(0.9);transform-origin:0 0">LIABILITY CAP</span>
<svg class="ab" style="left:2141px;top:313px" width="11" height="14" viewBox="0 0 11 14"><path d="M5.5 0.3 L10.2 5.6 H0.8 Z" fill="#CACDD3"/><path d="M5.5 13.7 L10.2 8.4 H0.8 Z" fill="#CACDD3"/></svg>
<svg class="ab" style="left:2180px;top:305px" width="32" height="28" viewBox="2180 305 32 28"><path d="M2187.5 319.2 H2204 M2197.6 312.8 L2204 319.2 L2197.6 325.6" fill="none" stroke="#80858E" stroke-width="2" stroke-linecap="round" stroke-linejoin="round"/></svg>
<div class="ab" style="left:103px;top:1345px;width:2117px;height:70px;background:#fff;border-top:1.5px solid #E8EAEE"></div>
<span class="t foot" style="left:134.20px;top:1370.56px;font-size:19.3px;line-height:19.3px;letter-spacing:0.51px">124 total contracts</span>
<span class="t pg" style="left:1686.50px;top:1371.16px;font-size:19.3px;line-height:19.3px;letter-spacing:0.14px">Per page</span>
<div class="ab" style="left:1772.8px;top:1358.9px;width:76.4px;height:41.6px;border:1.5px solid #DDE0E5;border-radius:8px;background:#fff"></div>
<span class="t pgd" style="left:1784.90px;top:1371.16px;font-size:19.3px;line-height:19.3px;letter-spacing:0.3px">10</span>
<svg class="ab" style="left:1816px;top:1370px" width="26" height="20" viewBox="1816 1370 26 20"><path d="M1822 1376.3 L1828.4 1382.7 L1834.8 1376.3" fill="none" stroke="#2A2C33" stroke-width="2" stroke-linecap="round" stroke-linejoin="round"/></svg>
<svg class="ab" style="left:1876px;top:1366px" width="22" height="28" viewBox="1876 1366 22 28"><path d="M1892 1371.5 L1882.3 1379.8 L1892 1388" fill="none" stroke="#CFD2D8" stroke-width="2" stroke-linecap="round" stroke-linejoin="round"/></svg>
<div class="ab" style="left:1906px;top:1359px;width:35.8px;height:41.5px;border:1.5px solid #DDE0E5;border-radius:6px;background:#F4F5F9"></div>
<span class="t pgd" style="left:1918.50px;top:1371.16px;font-size:19.3px;line-height:19.3px;">1</span>
<span class="t pg" style="left:1960.80px;top:1371.16px;font-size:19.3px;line-height:19.3px;">2</span>
<span class="t pg" style="left:2003.80px;top:1371.16px;font-size:19.3px;line-height:19.3px;">3</span>
<span class="t pg" style="left:2046.50px;top:1371.16px;font-size:19.3px;line-height:19.3px;">...</span>
<span class="t pg" style="left:2093.40px;top:1371.16px;font-size:19.3px;line-height:19.3px;">6</span>
<span class="t pg" style="left:2136.50px;top:1371.16px;font-size:19.3px;line-height:19.3px;">7</span>
<svg class="ab" style="left:2168px;top:1366px" width="24" height="28" viewBox="2168 1366 24 28"><path d="M2174.8 1371.5 L2185.3 1380 L2174.8 1388.5" fill="none" stroke="#3B3E46" stroke-width="2.2" stroke-linecap="round" stroke-linejoin="round"/></svg>
</div>
</body></html>
